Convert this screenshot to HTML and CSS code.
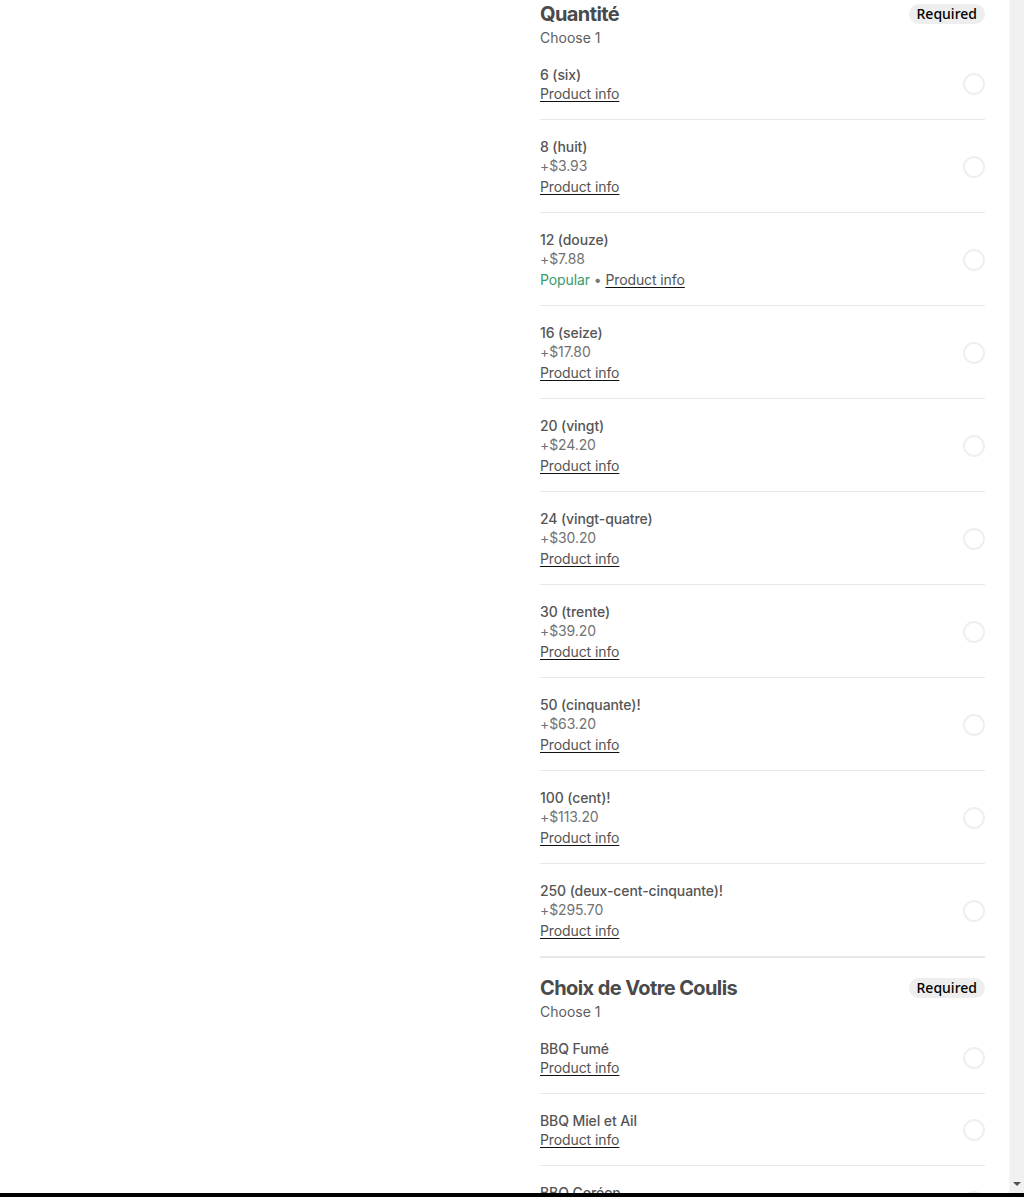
FILE: index.html
```html
<!DOCTYPE html>
<html lang="fr">
<head>
<meta charset="utf-8">
<title>Options</title>
<link rel="stylesheet" href="styles.css">
</head>
<body>
<div class="screen">
  <div class="viewport">
    <div class="media-pane"></div>
    <div class="options-pane">
      <section class="group">
        <header class="group-head">
          <div class="group-titles">
            <h2 class="group-title">Quantité</h2>
            <div class="group-sub">Choose 1</div>
          </div>
          <span class="badge">Required</span>
        </header>
        <ul class="opts">
          <li class="opt"><div class="opt-text"><div class="opt-name">6 (six)</div><div class="opt-meta"><a class="info" href="#">Product info</a></div></div><span class="radio"></span></li>
          <li class="opt"><div class="opt-text"><div class="opt-name">8 (huit)</div><div class="opt-price">+$3.93</div><div class="opt-meta"><a class="info" href="#">Product info</a></div></div><span class="radio"></span></li>
          <li class="opt"><div class="opt-text"><div class="opt-name">12 (douze)</div><div class="opt-price">+$7.88</div><div class="opt-meta"><span class="popular">Popular</span> • <a class="info" href="#">Product info</a></div></div><span class="radio"></span></li>
          <li class="opt"><div class="opt-text"><div class="opt-name">16 (seize)</div><div class="opt-price">+$17.80</div><div class="opt-meta"><a class="info" href="#">Product info</a></div></div><span class="radio"></span></li>
          <li class="opt"><div class="opt-text"><div class="opt-name">20 (vingt)</div><div class="opt-price">+$24.20</div><div class="opt-meta"><a class="info" href="#">Product info</a></div></div><span class="radio"></span></li>
          <li class="opt"><div class="opt-text"><div class="opt-name">24 (vingt-quatre)</div><div class="opt-price">+$30.20</div><div class="opt-meta"><a class="info" href="#">Product info</a></div></div><span class="radio"></span></li>
          <li class="opt"><div class="opt-text"><div class="opt-name">30 (trente)</div><div class="opt-price">+$39.20</div><div class="opt-meta"><a class="info" href="#">Product info</a></div></div><span class="radio"></span></li>
          <li class="opt"><div class="opt-text"><div class="opt-name">50 (cinquante)!</div><div class="opt-price">+$63.20</div><div class="opt-meta"><a class="info" href="#">Product info</a></div></div><span class="radio"></span></li>
          <li class="opt"><div class="opt-text"><div class="opt-name">100 (cent)!</div><div class="opt-price">+$113.20</div><div class="opt-meta"><a class="info" href="#">Product info</a></div></div><span class="radio"></span></li>
          <li class="opt"><div class="opt-text"><div class="opt-name">250 (deux-cent-cinquante)!</div><div class="opt-price">+$295.70</div><div class="opt-meta"><a class="info" href="#">Product info</a></div></div><span class="radio"></span></li>
        </ul>
      </section>
      <section class="group">
        <header class="group-head">
          <div class="group-titles">
            <h2 class="group-title">Choix de Votre Coulis</h2>
            <div class="group-sub">Choose 1</div>
          </div>
          <span class="badge">Required</span>
        </header>
        <ul class="opts">
          <li class="opt"><div class="opt-text"><div class="opt-name">BBQ Fumé</div><div class="opt-meta"><a class="info" href="#">Product info</a></div></div><span class="radio"></span></li>
          <li class="opt"><div class="opt-text"><div class="opt-name">BBQ Miel et Ail</div><div class="opt-meta"><a class="info" href="#">Product info</a></div></div><span class="radio"></span></li>
          <li class="opt"><div class="opt-text"><div class="opt-name">BBQ Coréen</div><div class="opt-meta"><a class="info" href="#">Product info</a></div></div><span class="radio"></span></li>
        </ul>
      </section>
    </div>
    <div class="scrollbar"><span class="arrow-down"></span></div>
  </div>
  <div class="bottom-strip"></div>
</div>
</body>
</html>
```
FILE: styles.css
```css
* { box-sizing: border-box; }
html, body { margin: 0; padding: 0; background: #fff; }
body { font-family: Inter, "Liberation Sans", Arial, sans-serif; color: #545454; font-size: 14px; }

.screen { height: 1197px; display: flex; flex-direction: column; overflow: hidden; }
.viewport { flex: 1; display: flex; min-height: 0; overflow: hidden; }
.media-pane { width: 516px; flex: none; }
.options-pane { flex: 1; padding: 0 24px; min-width: 0; }
.bottom-strip { height: 4px; background: #000; flex: none; }

.scrollbar { width: 15px; flex: none; background: #f1f1f1; display: flex; flex-direction: column; justify-content: flex-end; align-items: center; padding-bottom: 7px; border-left: 1px solid #f7f7f7; }
.arrow-down { width: 0; height: 0; border-left: 4px solid transparent; border-right: 4px solid transparent; border-top: 4px solid #505050; }

.group + .group { border-top: 2px solid #e8e8e8; padding-top: 16px; }
.group-head { display: flex; justify-content: space-between; align-items: flex-start; }
.group-title { margin: 0; font-size: 20px; line-height: 28px; font-weight: 700; color: #4a4a4a; letter-spacing: -0.6px; }
.group-sub { font-size: 14px; line-height: 20px; color: #5e5e5e; }
.badge { margin-top: 4px; background: #eeeeee; color: #000; border-radius: 10px; padding: 0 8px; font-family: "Noto Sans", "Open Sans", sans-serif; font-weight: 500; font-size: 14px; line-height: 20px; }

.opts { list-style: none; margin: 0; padding: 0; }
.opt { display: flex; align-items: center; justify-content: space-between; padding: 17px 0 16px; border-bottom: 1px solid #e8e8e8; }
.group .opt:last-child { border-bottom: none; }
.opt-text { display: flex; flex-direction: column; }
.opt-name { font-size: 14px; line-height: 20px; font-weight: 500; color: #555; letter-spacing: -0.1px; }
.opt-price { font-size: 14px; line-height: 18px; margin-bottom: 3px; color: #727272; letter-spacing: -0.1px; }
.opt-meta { font-size: 14px; line-height: 18px; color: #777; letter-spacing: -0.1px; }
.info { color: #545454; text-decoration: underline; text-decoration-color: #111; text-underline-offset: 2px; }
.popular { color: #3a9a6a; }
.radio { width: 22px; height: 22px; border-radius: 50%; border: 2px solid #efefef; flex: none; }
```
